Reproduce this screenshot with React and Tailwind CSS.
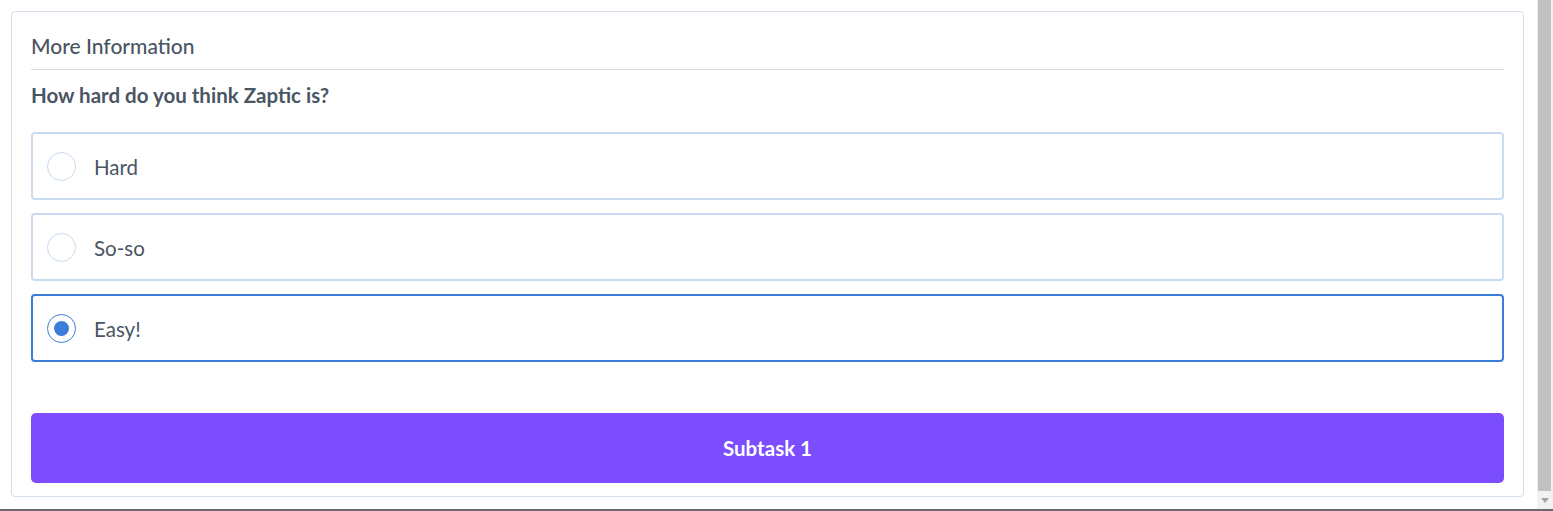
import { useState } from 'react';

const options = ['Hard', 'So-so', 'Easy!'];

function Option({ label, selected, onSelect }) {
  return (
    <button
      onClick={onSelect}
      className={`flex h-[68px] w-full items-center rounded-[4px] border-2 bg-white pl-[14px] text-left ${
        selected ? 'border-[#3b7dd8]' : 'border-[#c9dcef]'
      }`}
    >
      <span
        className={`flex h-[29px] w-[29px] items-center justify-center rounded-full border ${
          selected ? 'border-[#3b7dd8]' : 'border-[#c8daee]'
        }`}
      >
        {selected && <span className="h-[15px] w-[15px] rounded-full bg-[#3b7dd8]" />}
      </span>
      <span className="ml-[18px] pt-[2px] text-[20.5px] text-[#4a5563]">{label}</span>
    </button>
  );
}

export default function App() {
  const [choice, setChoice] = useState('Easy!');

  return (
    <div className="flex h-[511px] flex-col bg-white font-['Lato','Open_Sans',sans-serif]">
      <div className="flex flex-1 overflow-hidden">
        <div className="flex-1 pl-[11px] pt-[11px]">
          <div className="flex h-[486px] w-[1513px] flex-col rounded-[4px] border border-[#d3dfeb] px-[19px]">
            <div className="border-b border-[#d3dce6] pb-[9px] pt-[20px]">
              <h2 className="text-[21px] leading-[28px] font-medium text-[#4a5563]">More Information</h2>
            </div>
            <p className="pt-[11px] text-[20.5px] leading-[28px] font-bold text-[#4a5563]">
              How hard do you think Zaptic is?
            </p>
            <div className="mt-[23px] flex flex-col gap-[13px]">
              {options.map((o) => (
                <Option key={o} label={o} selected={choice === o} onSelect={() => setChoice(o)} />
              ))}
            </div>
            <button className="mt-[51px] h-[70px] w-full rounded-[5px] bg-[#7b4dff] text-[20.5px] font-bold text-white">
              Subtask 1
            </button>
          </div>
        </div>
        <div className="flex w-[16px] flex-col bg-[#f1f1f1]">
          <div className="ml-[1px] h-[491px] w-[13px] bg-[#c1c1c1]" />
          <div className="flex flex-1 items-center justify-center">
            <svg width="8" height="5" viewBox="0 0 8 5">
              <path d="M0 0h8L4 5z" fill="#a3a3a3" />
            </svg>
          </div>
        </div>
      </div>
      <div className="h-[2px] bg-[#6b6b6b]" />
    </div>
  );
}
